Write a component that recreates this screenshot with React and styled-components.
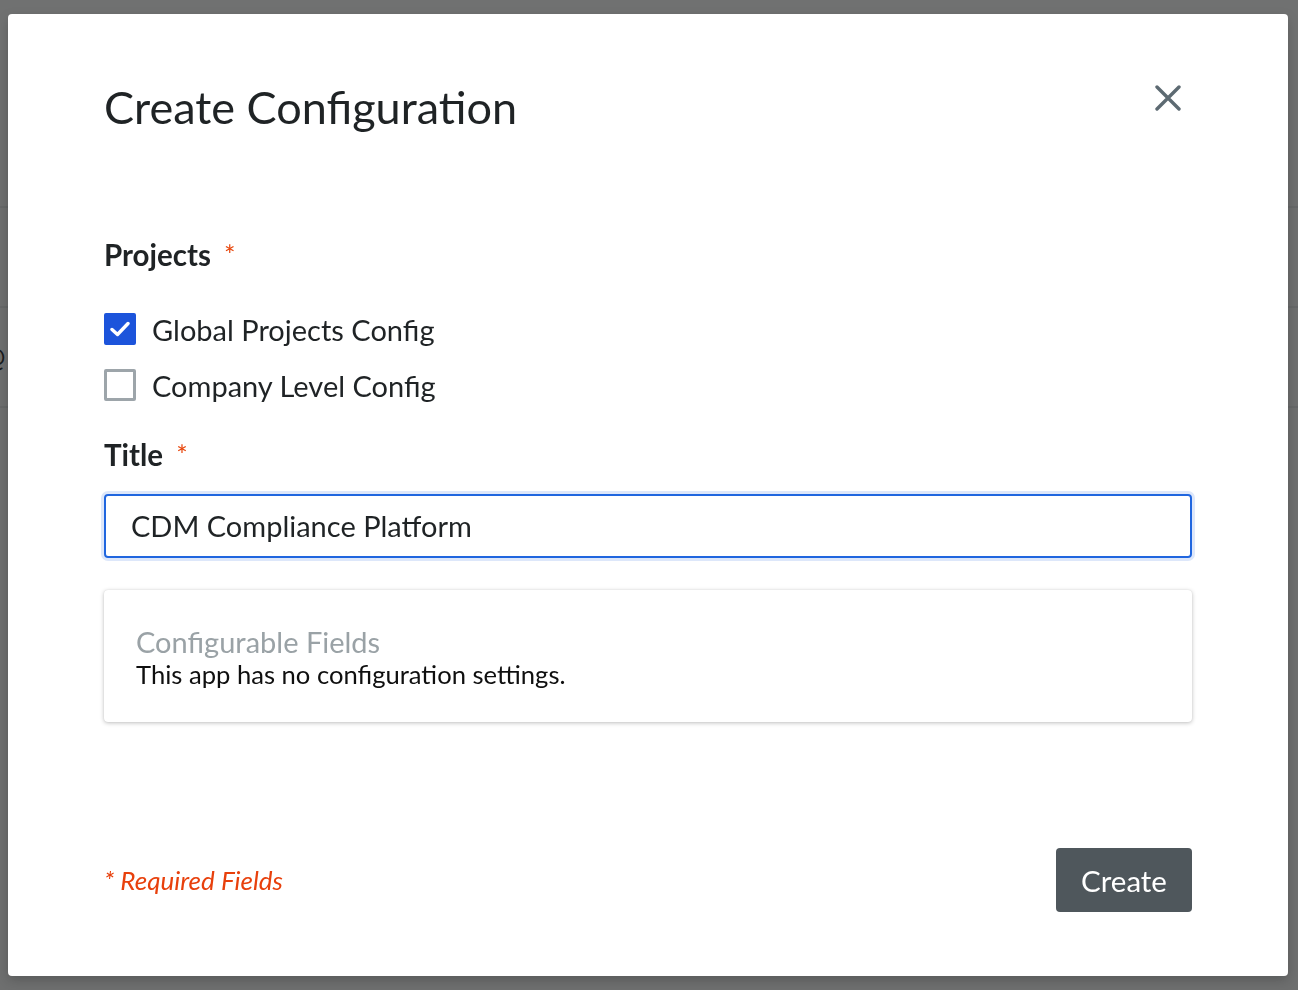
import styled, { createGlobalStyle } from 'styled-components';

const GlobalStyle = createGlobalStyle`
    html, body {
        margin: 0;
        padding: 0;
        background: #ffffff;
        font-family: Lato, "Open Sans", Arial, sans-serif;
    }
    * {
        box-sizing: border-box;
    }
`;

const Page = styled.div`
    height: 990px;
    overflow: hidden;
    background: #f4f5f5;
`;

const PageHeader = styled.div`
    height: 50px;
    background: #fbfbfb;
`;

const PageRow = styled.div`
    height: ${(p) => p.h}px;
    border-bottom: 2px solid #e2e4e5;
    display: flex;
    align-items: center;
    font-size: 28px;
    color: #232729;
    margin-left: -18px;
`;

const Overlay = styled.div`
    position: fixed;
    inset: 0;
    background: rgba(20, 22, 21, 0.6);
    padding: 14px 10px 14px 8px;
`;

const Modal = styled.div`
    background: #ffffff;
    border-radius: 4px;
    height: 962px;
    padding: 66px 96px 64px 96px;
    display: flex;
    flex-direction: column;
    box-shadow: 0 4px 12px rgba(0, 0, 0, 0.2);
`;

const Header = styled.div`
    display: flex;
    justify-content: space-between;
    align-items: flex-start;
`;

const Heading = styled.h1`
    margin: 0;
    font-size: 45px;
    font-weight: 400;
    line-height: 1.2;
    color: #1f2325;
`;

const CloseButton = styled.button`
    border: none;
    background: none;
    padding: 0;
    margin: -2px 4px 0 0;
    width: 40px;
    height: 40px;
    display: flex;
    align-items: center;
    justify-content: center;
    cursor: pointer;
`;

const Label = styled.div`
    font-size: 29.5px;
    font-weight: 700;
    line-height: 1.2;
    color: #1f2325;
    margin-top: ${(p) => p.top}px;
    display: flex;
    align-items: flex-start;
`;

const Star = styled.span`
    color: #e8470d;
    font-size: 27px;
    font-weight: 400;
    margin: 4px 0 0 13px;
    line-height: 1;
`;

const CheckList = styled.div`
    display: flex;
    flex-direction: column;
    gap: 24px;
    margin-top: 41px;
`;

const CheckRow = styled.label`
    display: flex;
    align-items: center;
    gap: 16px;
    font-size: 29px;
    color: #1f2325;
    height: 32px;
`;

const Box = styled.span`
    width: 32px;
    height: 32px;
    flex: none;
    display: flex;
    align-items: center;
    justify-content: center;
    border-radius: 2px;
    background: ${(p) => (p.checked ? '#1c54db' : '#ffffff')};
    border: 3px solid ${(p) => (p.checked ? '#1c54db' : '#9da5aa')};
`;

const Input = styled.div`
    margin-top: 21px;
    height: 64px;
    border: 2px solid #2066df;
    border-radius: 4px;
    box-shadow: 0 0 0 3px #dde7fa;
    display: flex;
    align-items: center;
    padding: 0 25px;
    font-size: 29px;
    color: #1f2325;
`;

const Card = styled.div`
    margin-top: 32px;
    border-radius: 4px;
    background: #ffffff;
    box-shadow: 0 1px 4px rgba(0, 0, 0, 0.25), 0 0 1px rgba(0, 0, 0, 0.12);
    padding: 35px 32px 31px;
    display: flex;
    flex-direction: column;
    line-height: 33px;
`;

const CardTitle = styled.div`
    color: #9aa2a6;
    font-size: 29px;
`;

const CardText = styled.div`
    color: #0f0f0f;
    font-size: 25.6px;
`;

const Footer = styled.div`
    margin-top: auto;
    display: flex;
    justify-content: space-between;
    align-items: center;
`;

const Required = styled.div`
    color: #e8400c;
    font-style: italic;
    font-size: 26px;
`;

const CreateButton = styled.button`
    width: 136px;
    height: 64px;
    border: none;
    border-radius: 4px;
    background: #4f575c;
    color: #ffffff;
    font-family: inherit;
    font-size: 29.5px;
    cursor: pointer;
`;

function CloseIcon() {
    return (
        <svg width="26" height="26" viewBox="0 0 26 26">
            <path d="M2 2 L24 24 M24 2 L2 24" stroke="#5d6a72" strokeWidth="3.4" strokeLinecap="round" />
        </svg>
    );
}

function Check() {
    return (
        <svg width="20" height="16" viewBox="0 0 20 16">
            <path d="M2 8.5 L7.5 13.5 L18 2.5" stroke="#ffffff" strokeWidth="3.4" fill="none" strokeLinecap="round" strokeLinejoin="round" />
        </svg>
    );
}

function App() {
    return (
        <>
            <GlobalStyle />
            <Page>
                <PageHeader />
                <PageRow h={158} />
                <PageRow h={100} />
                <PageRow h={100}>@</PageRow>
            </Page>
            <Overlay>
                <Modal>
                    <Header>
                        <Heading>Create Configuration</Heading>
                        <CloseButton aria-label="Close">
                            <CloseIcon />
                        </CloseButton>
                    </Header>
                    <Label top={103}>
                        Projects<Star>*</Star>
                    </Label>
                    <CheckList>
                        <CheckRow>
                            <Box checked>
                                <Check />
                            </Box>
                            Global Projects Config
                        </CheckRow>
                        <CheckRow>
                            <Box />
                            Company Level Config
                        </CheckRow>
                    </CheckList>
                    <Label top={36}>
                        Title<Star>*</Star>
                    </Label>
                    <Input>CDM Compliance Platform</Input>
                    <Card>
                        <CardTitle>Configurable Fields</CardTitle>
                        <CardText>This app has no configuration settings.</CardText>
                    </Card>
                    <Footer>
                        <Required>* Required Fields</Required>
                        <CreateButton>Create</CreateButton>
                    </Footer>
                </Modal>
            </Overlay>
        </>
    );
}

export default App;
